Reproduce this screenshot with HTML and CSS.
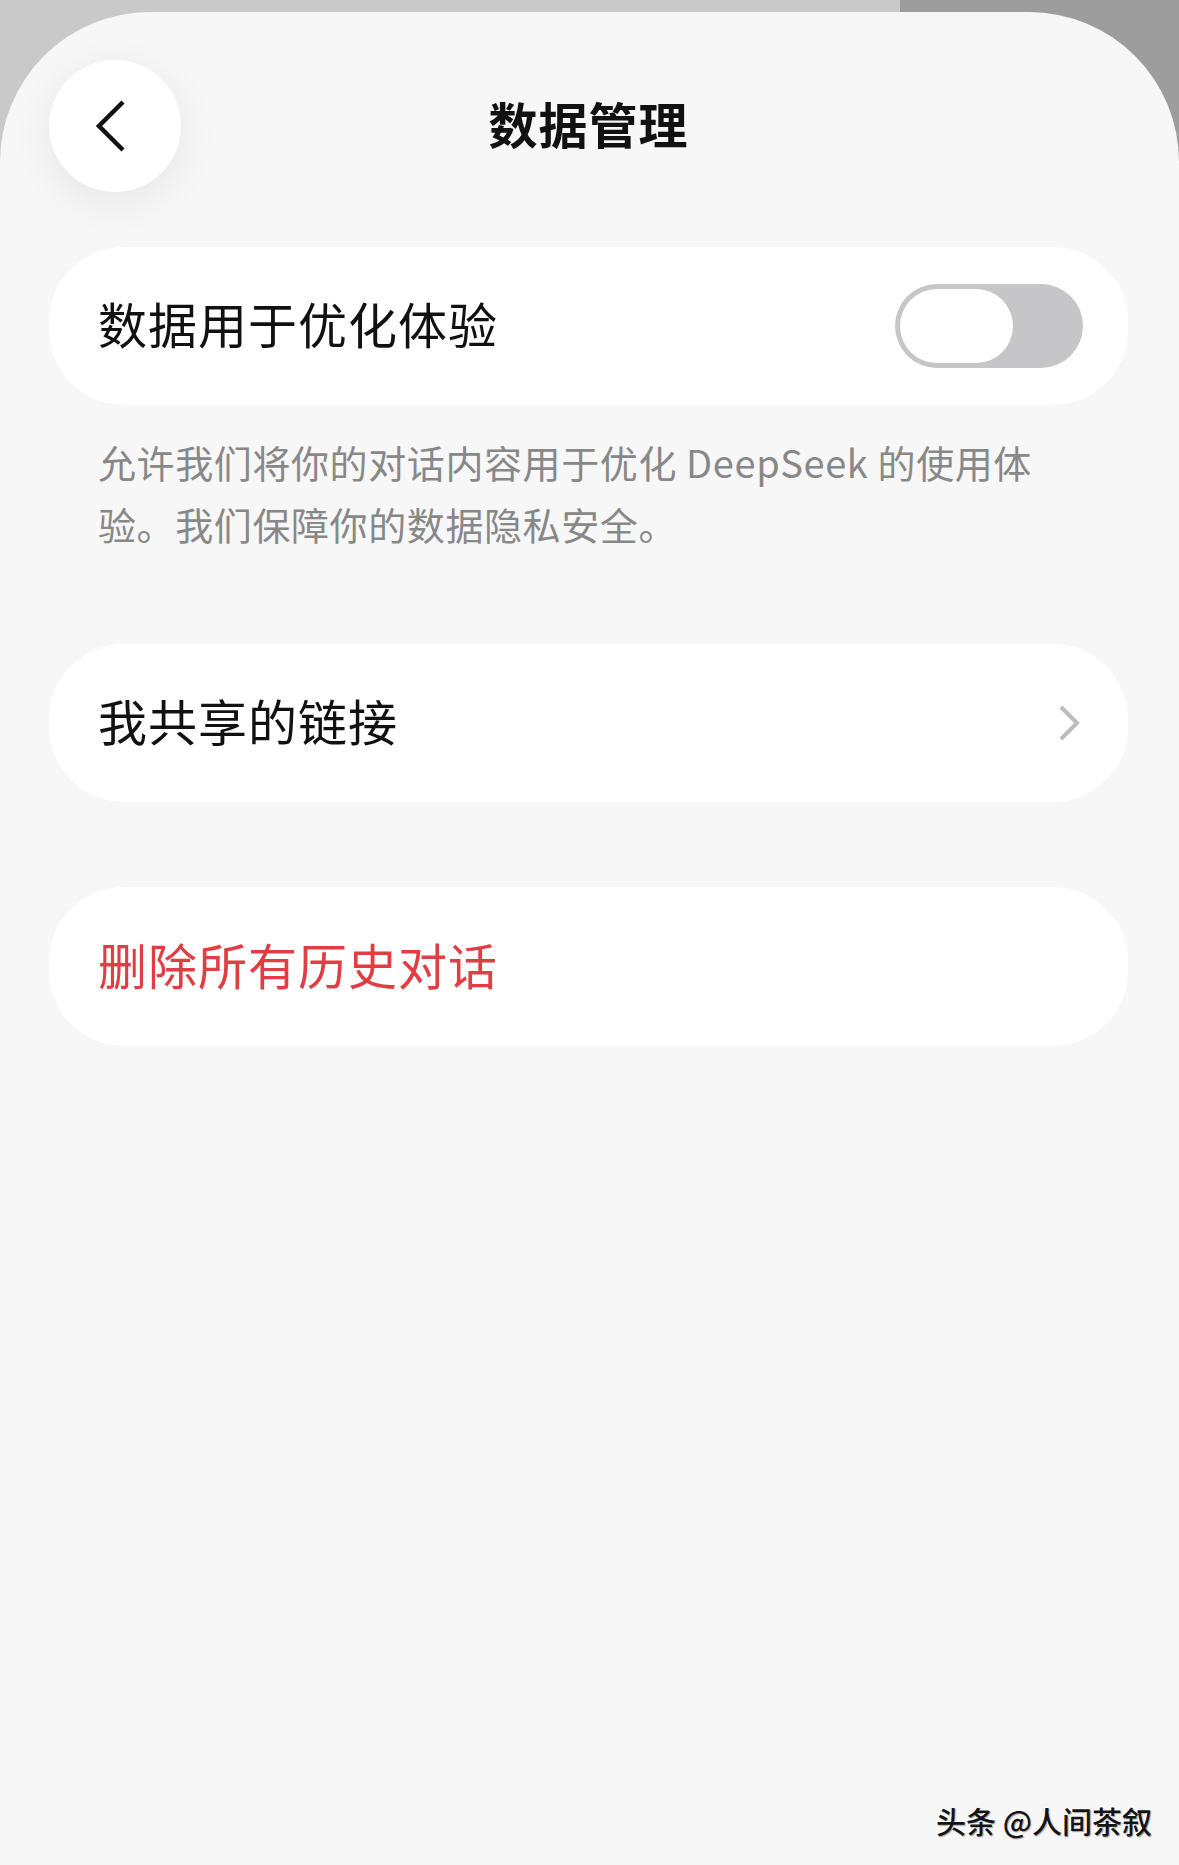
FILE: index.html
```html
<!DOCTYPE html>
<html lang="zh-CN">
<head>
    <meta charset="UTF-8" />
    <title>数据管理</title>
    <link rel="stylesheet" href="styles.css">
</head>
<body>
    <div class="sheet">
        <header class="topbar">
            <button class="back-btn" aria-label="返回">
                <svg width="48" height="64" viewBox="0 0 48 64">
                    <polyline points="37,8 13,32 37,56" fill="none" stroke="#111" stroke-width="4.5" stroke-linecap="butt" stroke-linejoin="miter"/>
                </svg>
            </button>
            <h1 class="title">数据管理</h1>
            <span></span>
        </header>
        <main>
            <section class="card">
                <span class="card-label">数据用于优化体验</span>
                <div class="toggle"><span class="knob"></span></div>
            </section>
            <p class="desc">允许我们将你的对话内容用于优化 DeepSeek 的使用体验。我们保障你的数据隐私安全。</p>

            <section class="card card-links">
                <span class="card-label">我共享的链接</span>
                <svg class="chevron" width="24" height="40" viewBox="0 0 24 40">
                    <polyline points="4,4 20,20 4,36" fill="none" stroke="#bcbcbc" stroke-width="4"/>
                </svg>
            </section>

            <section class="card card-danger">
                <span class="card-label danger">删除所有历史对话</span>
            </section>
        </main>
        <div class="watermark">头条 @人间茶叙</div>
    </div>
</body>
</html>
```

FILE: styles.css
```css
body {
    margin: 0;
    background: linear-gradient(to right, rgb(201, 201, 201) 76.3%, rgb(157, 157, 157) 76.3%);
    font-family: "Noto Sans CJK SC", "Noto Sans", sans-serif;
    color: rgb(17, 17, 17);
}
.sheet {
    position: relative;
    margin-top: 12px;
    min-height: 1853px;
    box-sizing: border-box;
    padding: 48px 51px 0 49px;
    background: rgb(247, 247, 247);
    border-radius: 150px 150px 0 0;
}
.topbar {
    display: grid;
    grid-template-columns: 132px 1fr 132px;
    align-items: center;
    height: 132px;
}
.back-btn {
    width: 132px;
    height: 132px;
    border: none;
    border-radius: 50%;
    background: rgb(255, 255, 255);
    box-shadow: 0 10px 40px rgba(0, 0, 0, 0.07);
    display: flex;
    align-items: center;
    justify-content: center;
    padding: 0 10px 0 0;
    cursor: pointer;
}
.title {
    margin: 0;
    padding-bottom: 8px;
    text-align: center;
    font-size: 49px;
    font-weight: 700;
    letter-spacing: 1px;
}
main {
    padding-top: 55px;
}
.card {
    display: flex;
    align-items: center;
    justify-content: space-between;
    height: 158px;
    padding: 0 45px 0 49px;
    background: rgb(255, 255, 255);
    border-radius: 75px;
}
.card-label {
    padding-bottom: 7px;
    font-size: 49px;
    letter-spacing: 1px;
}
.danger {
    color: rgb(224, 62, 66);
}
.toggle {
    display: flex;
    width: 188px;
    height: 84px;
    box-sizing: border-box;
    padding: 5px;
    background: rgb(198, 198, 200);
    border-radius: 42px;
}
.knob {
    width: 113px;
    height: 74px;
    background: rgb(255, 255, 255);
    border-radius: 37px;
}
.desc {
    margin: 26px 0 0;
    padding: 0 49px;
    max-width: 975px;
    font-size: 38px;
    line-height: 62px;
    letter-spacing: 0.6px;
    color: rgb(136, 136, 136);
}
.card-links {
    margin-top: 89px;
    padding-right: 47px;
}
.chevron {
    display: block;
}
.card-danger {
    margin-top: 85px;
    height: 159px;
}
.watermark {
    position: absolute;
    right: 27px;
    bottom: 23px;
    font-size: 30px;
    font-weight: 500;
    color: rgb(20, 20, 20);
    text-shadow: -1px -1px 0 rgb(255, 255, 255), 1px 1px 1px rgba(0, 0, 0, 0.35);
}
```
